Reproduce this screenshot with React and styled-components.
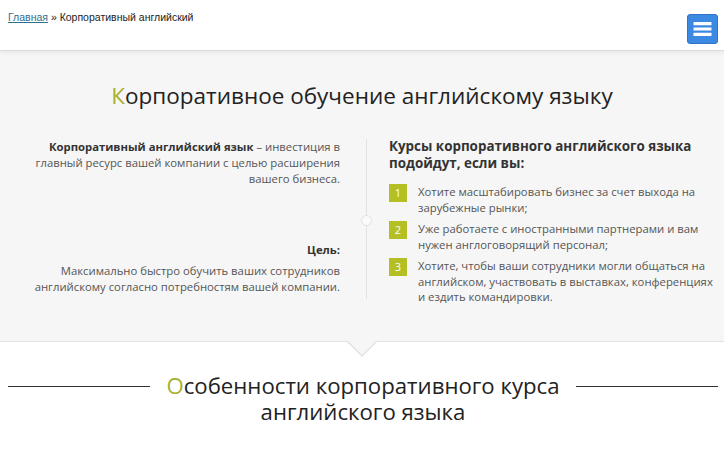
import React from "react";
import styled, { createGlobalStyle } from "styled-components";

const Global = createGlobalStyle`
  html, body { margin: 0; padding: 0; background: #ffffff; }
  body { font-family: "Open Sans", "Liberation Sans", sans-serif; color: #333; }
  * { box-sizing: border-box; }
`;

const Header = styled.header`
  height: 51px;
  display: flex;
  justify-content: space-between;
  align-items: flex-start;
  padding: 9px 6px 0 8px;
  background: #fff;
  border-bottom: 1px solid #dcdcdc;
  box-shadow: 0 2px 4px rgba(0, 0, 0, 0.06);
  position: relative;
  z-index: 1;
`;

const Crumbs = styled.nav`
  font-family: "Liberation Sans", Arial, sans-serif;
  font-size: 10.5px;
  line-height: 16px;
  color: #222;
  a { color: #2f6e8e; text-decoration: underline; }
`;

const MenuButton = styled.button`
  margin-top: 5px;
  width: 31px;
  height: 30px;
  border-radius: 3px;
  border: 1px solid #2f74c8;
  background: #3b89e2;
  display: flex;
  align-items: center;
  justify-content: center;
  padding: 0;
`;

const Intro = styled.section`
  background: #f6f6f6;
  border-bottom: 1px solid #e2e2e2;
  padding: 30px 0 36px;
  position: relative;
`;

const Title = styled.h1`
  margin: 0 0 28px;
  text-align: center;
  font-weight: 400;
  font-size: 22.5px;
  line-height: 30px;
  color: #222;
`;

const Accent = styled.span`
  color: #a6b02c;
`;

const Columns = styled.div`
  display: grid;
  grid-template-columns: 344px 1px 1fr;
  column-gap: 22px;
  padding-right: 10px;
`;

const LeftCol = styled.div`
  text-align: right;
  padding: 0 4px 0 30px;
`;

const Para = styled.p`
  margin: 0;
  font-size: 11.3px;
  line-height: 16px;
  color: #555;
  b { color: #333; font-weight: 700; }
`;

const Label = styled.p`
  margin: 55px 0 5px;
  font-size: 11.3px;
  line-height: 16px;
  font-weight: 700;
  color: #333;
`;

const Divider = styled.div`
  position: relative;
  background: #e2e2e2;
  width: 1px;
  height: 160px;
  &::after {
    content: "";
    position: absolute;
    left: -5px;
    top: 76px;
    width: 9px;
    height: 9px;
    border-radius: 50%;
    border: 1px solid #e2e2e2;
    background: #fafafa;
  }
`;

const RightCol = styled.div`
  max-width: 326px;
`;

const Heading = styled.h2`
  margin: -1px 0 12px;
  font-size: 13.4px;
  line-height: 17px;
  font-weight: 700;
  color: #333;
`;

const List = styled.ol`
  list-style: none;
  margin: 0;
  padding: 0;
  display: flex;
  flex-direction: column;
  gap: 6px;
`;

const Item = styled.li`
  display: flex;
  gap: 11px;
  font-size: 11.3px;
  line-height: 15.5px;
  color: #555;
`;

const Badge = styled.span`
  flex: none;
  width: 18px;
  height: 18px;
  background: #b3bf22;
  color: #fff;
  font-size: 11px;
  line-height: 18px;
  text-align: center;
`;

const Notch = styled.div`
  position: absolute;
  left: 50%;
  bottom: -16px;
  transform: translateX(-50%);
  width: 0;
  height: 0;
  border-left: 16px solid transparent;
  border-right: 16px solid transparent;
  border-top: 16px solid #e2e2e2;
  &::after {
    content: "";
    position: absolute;
    left: -15px;
    top: -17px;
    border-left: 15px solid transparent;
    border-right: 15px solid transparent;
    border-top: 15px solid #f6f6f6;
  }
`;

const Features = styled.section`
  padding: 31px 6px 0 8px;
`;

const FeatureTitle = styled.h2`
  display: grid;
  grid-template-columns: 1fr auto 1fr;
  align-items: start;
  column-gap: 16px;
  margin: 0;
  font-weight: 400;
  font-size: 22.2px;
  line-height: 26px;
  color: #222;
  text-align: center;
`;

const Rule = styled.span`
  height: 1px;
  margin-top: 13px;
  background: #333;
`;

const items = [
  "Хотите масштабировать бизнес за счет выхода на зарубежные рынки;",
  "Уже работаете с иностранными партнерами и вам нужен англоговорящий персонал;",
  "Хотите, чтобы ваши сотрудники могли общаться на английском, участвовать в выставках, конференциях и ездить командировки.",
];

export default function App() {
  return (
    <>
      <Global />
      <Header>
        <Crumbs>
          <a href="#">Главная</a> » Корпоративный английский
        </Crumbs>
        <MenuButton aria-label="Меню">
          <svg width="19" height="16" viewBox="0 0 19 16">
            <rect x="0.5" y="1" width="18" height="3.2" rx="0.5" fill="#fff" />
            <rect x="0.5" y="6.4" width="18" height="3.2" rx="0.5" fill="#fff" />
            <rect x="0.5" y="11.8" width="18" height="3.2" rx="0.5" fill="#fff" />
          </svg>
        </MenuButton>
      </Header>

      <Intro>
        <Title>
          <Accent>К</Accent>орпоративное обучение английскому языку
        </Title>
        <Columns>
          <LeftCol>
            <Para>
              <b>Корпоративный английский язык</b> – инвестиция в главный ресурс
              вашей компании с целью расширения вашего бизнеса.
            </Para>
            <Label>Цель:</Label>
            <Para>
              Максимально быстро обучить ваших сотрудников английскому согласно
              потребностям вашей компании.
            </Para>
          </LeftCol>
          <Divider />
          <RightCol>
            <Heading>
              Курсы корпоративного английского языка подойдут, если вы:
            </Heading>
            <List>
              {items.map((t, i) => (
                <Item key={i}>
                  <Badge>{i + 1}</Badge>
                  <span>{t}</span>
                </Item>
              ))}
            </List>
          </RightCol>
        </Columns>
        <Notch />
      </Intro>

      <Features>
        <FeatureTitle>
          <Rule />
          <span>
            <Accent>О</Accent>собенности корпоративного курса
            <br />
            английского языка
          </span>
          <Rule />
        </FeatureTitle>
      </Features>
    </>
  );
}
